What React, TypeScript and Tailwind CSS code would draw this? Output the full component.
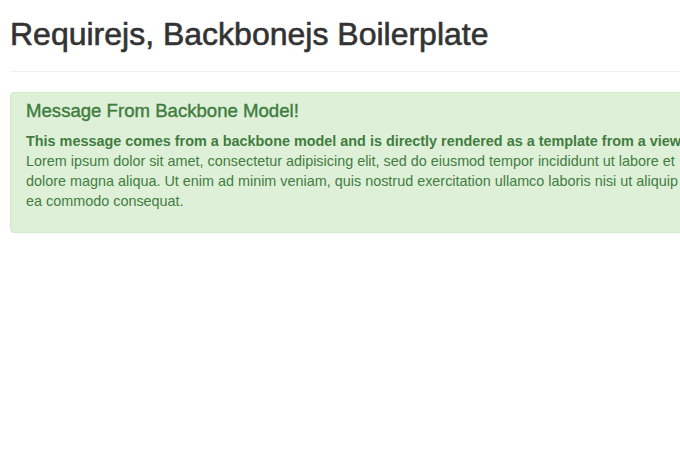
export default function App() {
  return (
    <div className="w-[680px] h-[464px] overflow-hidden bg-white font-['Liberation_Sans',Arial,sans-serif] text-[#333333]">
      <div className="w-[760px] px-[10px]">
        <div className="pt-[17px] pb-[19px] border-b border-[#eeeeee]">
          <h1 className="text-[32px] leading-[35px] font-medium [-webkit-text-stroke:0.6px_#333333]">Requirejs, Backbonejs Boilerplate</h1>
        </div>
        <div className="mt-[20px] w-[735px] rounded-[4px] border border-[#d6e9c6] bg-[#dff0d8] text-[#3f7d3f] pt-[8px] pb-[11px] pl-[15px] pr-[35px]">
          <h4 className="text-[18.6px] leading-[20px] font-medium mb-[10px] [-webkit-text-stroke:0.4px_#3f7d3f]">Message From Backbone Model!</h4>
          <p className="text-[14.4px] leading-[20px] mb-[10px]">
            <strong className="font-bold">This message comes from a backbone model and is directly rendered as a template from a view.</strong>
            <br />
            Lorem ipsum dolor sit amet, consectetur adipisicing elit, sed do eiusmod tempor incididunt ut labore et dolore magna aliqua. Ut enim ad minim veniam, quis nostrud exercitation ullamco laboris nisi ut aliquip ex ea commodo consequat.
          </p>
        </div>
      </div>
    </div>
  );
}
